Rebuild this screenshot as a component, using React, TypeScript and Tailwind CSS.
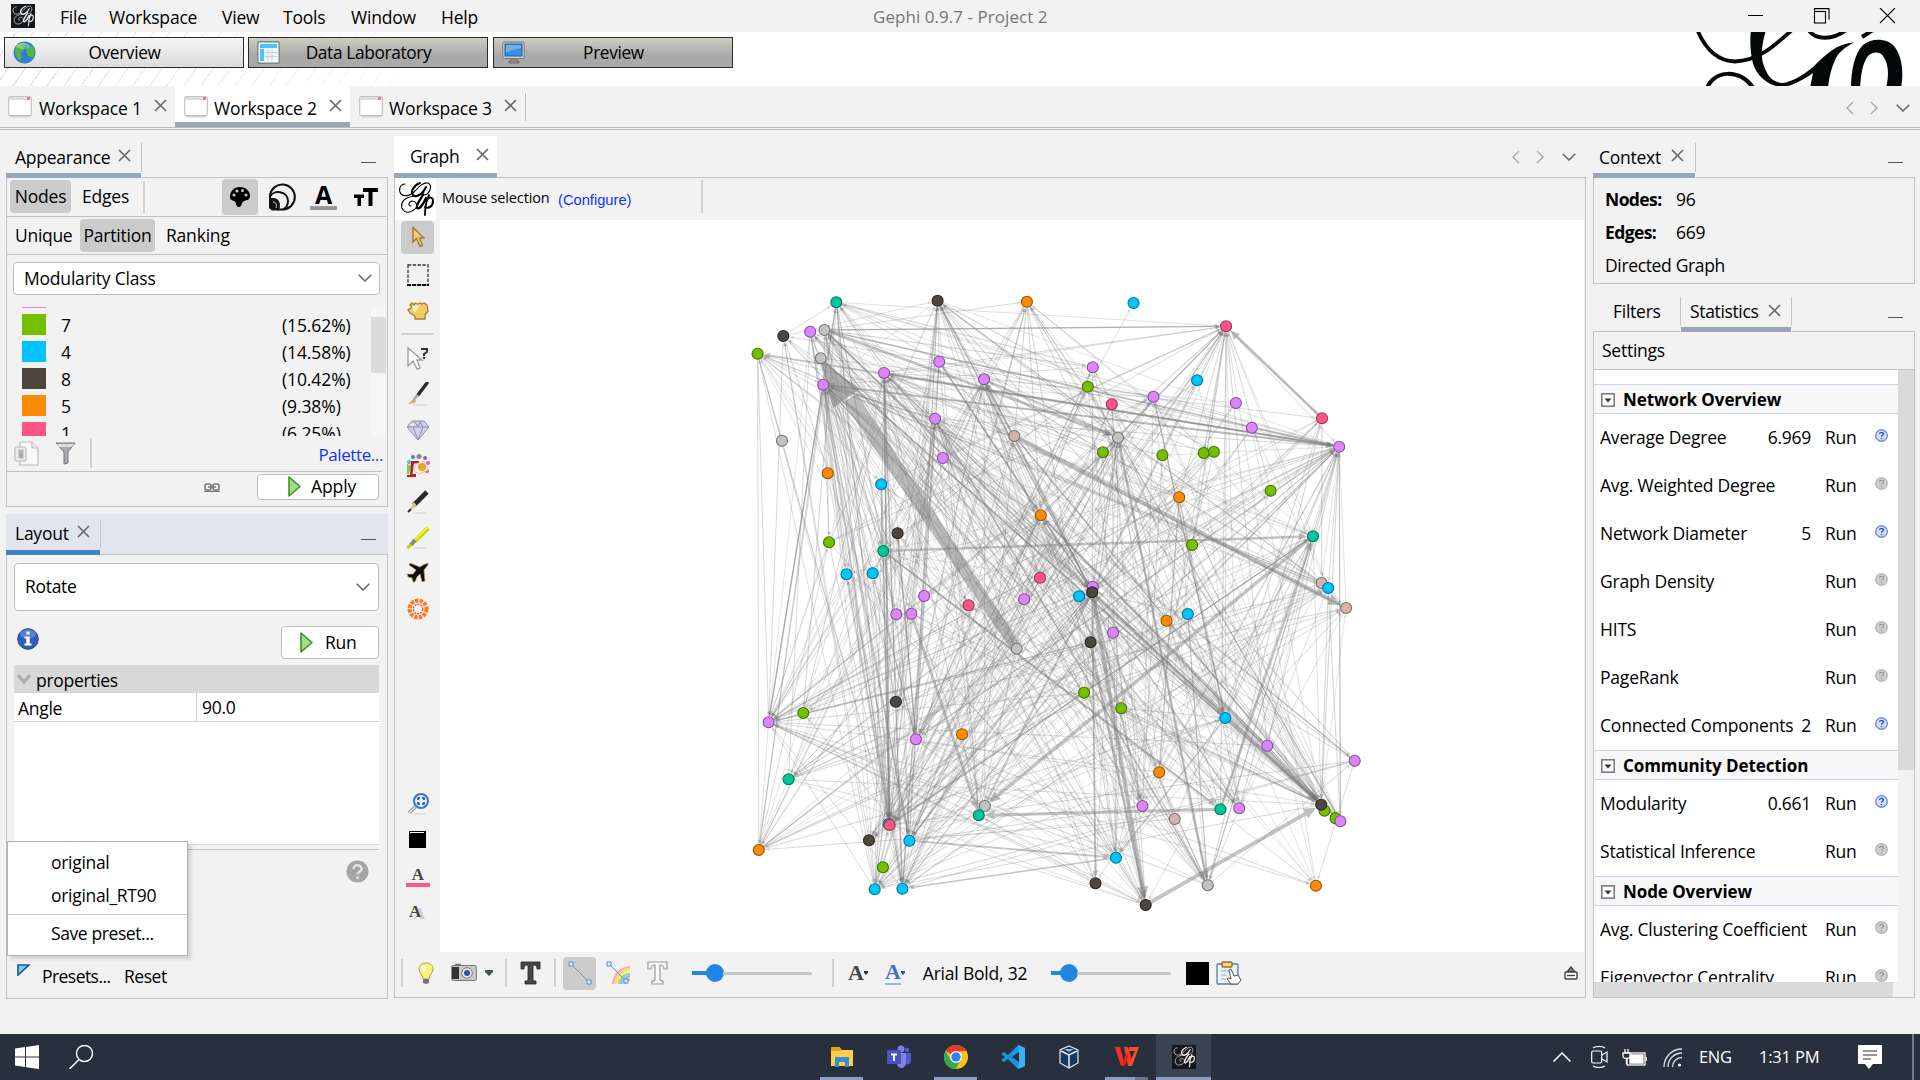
import React from 'react';

type Kids = { children?: React.ReactNode };

/* ---------- graph data ---------- */
const FILL: Record<string, string> = {
  t: '#00c49a', d: '#4c463e', o: '#ff8a05', b: '#00c4ff', p: '#ff5584', v: '#dc85ff', g: '#c2c2c2', n: '#73c000', r: '#d3b3b0',
};
const RING: Record<string, string> = {
  t: '#00765c', d: '#2a2622', o: '#995200', b: '#007599', p: '#99334f', v: '#845099', g: '#747474', n: '#457300', r: '#7f6b69',
};
const NODES: [string, number, number][] = [
  ['t', 836.3, 302.3], ['d', 937.6, 300.7], ['o', 1026.9, 301.7], ['b', 1133.5, 303], ['p', 1226.1, 326.3], ['d', 783.3, 336],
  ['v', 810.2, 331.7], ['g', 824.5, 330], ['n', 757.6, 353.7], ['g', 820.8, 358.3], ['v', 884.1, 373], ['v', 939.2, 361.7],
  ['v', 984.1, 379.3], ['v', 823.3, 384.7], ['v', 1092.7, 367.3], ['n', 1087.8, 386.7], ['b', 1197.1, 380.3], ['p', 1111.8, 404.3],
  ['v', 1153.5, 396.7], ['v', 1235.9, 403], ['v', 1251.8, 427.7], ['p', 1322, 418.3], ['v', 1339.2, 446.7], ['v', 935.1, 418.7],
  ['r', 1014.3, 436], ['g', 1118, 437.7], ['g', 782, 440.7], ['v', 942.9, 458], ['n', 1102.9, 452.3], ['n', 1162.4, 455.3],
  ['n', 1203.7, 453], ['n', 1213.9, 451.7], ['o', 827.8, 473.3], ['b', 881.2, 484.3], ['n', 1270.6, 490.7], ['o', 1179.2, 497.3],
  ['o', 1040.8, 515.3], ['t', 1313, 536.3], ['d', 897.6, 533.3], ['n', 829, 542.3], ['t', 883.3, 551], ['n', 1192.2, 545],
  ['b', 846.5, 574.3], ['b', 872.7, 573.3], ['p', 1040, 577.7], ['r', 1321.6, 583], ['b', 1328.2, 588], ['v', 1092.7, 586.7],
  ['d', 1092.2, 592.3], ['b', 1079.2, 596.3], ['v', 1024.1, 599.3], ['v', 924.1, 596], ['p', 968.6, 605.3], ['r', 1346.1, 608],
  ['v', 896.3, 614.3], ['v', 911.4, 613.7], ['o', 1166.5, 620.7], ['b', 1187.8, 614], ['v', 1113.1, 632.7], ['d', 1090.6, 642.3],
  ['g', 1016.7, 648.7], ['n', 1084.1, 692.7], ['n', 1121.2, 708.3], ['d', 895.9, 701.7], ['n', 803.3, 713], ['v', 768.6, 722.3],
  ['b', 1225.3, 718], ['v', 915.9, 739.3], ['o', 962, 734.3], ['v', 1267.3, 745.7], ['v', 1354.7, 760.7], ['o', 1159.2, 772.3],
  ['t', 788.6, 779.3], ['g', 984.9, 806], ['t', 978.8, 815.3], ['v', 1142.4, 806], ['t', 1220.4, 809.3], ['v', 1239.2, 808.3],
  ['r', 1174.7, 819], ['n', 1324.5, 810.7], ['d', 1321.2, 804.7], ['n', 1335.5, 818.3], ['v', 1340.4, 821.3], ['b', 888.5, 824],
  ['p', 889.6, 824.9], ['b', 909.4, 840.7], ['d', 869, 840.3], ['o', 758.8, 850], ['n', 882.9, 867.3], ['b', 1115.9, 857.7],
  ['d', 1095.5, 883.3], ['b', 874.7, 889.3], ['b', 902.4, 888.7], ['g', 1207.8, 885.3], ['o', 1315.9, 885.7], ['d', 1145.7, 905],
];
/* source, target, weight */
const HEAVY: [number, number, number][] = [
  [24, 53, 4], [40, 37, 2.4], [21, 4, 2.8], [37, 73, 3.4], [95, 80, 3.8], [76, 74, 3], [48, 95, 4], [59, 95, 2.5],
  [13, 22, 2], [10, 22, 2], [7, 22, 1.6], [48, 80, 3], [36, 80, 2], [7, 25, 2.8], [22, 8, 1.8], [25, 93, 2.4], [55, 74, 2.8], [76, 37, 2.4],
  [40, 76, 2], [13, 65, 1.4], [12, 25, 2], [23, 93, 1.6], [10, 84, 2], [33, 84, 1.8], [59, 65, 1.5], [12, 48, 1.7], [1, 48, 1.6],
  [48, 90, 1.8], [85, 89, 1.8], [89, 92, 1.5], [13, 85, 1.5], [10, 92, 1.4], [7, 48, 1.8], [9, 80, 1.8], [18, 66, 1.4], [7, 4, 1.4],
  [37, 84, 1.4], [22, 67, 1.4], [38, 67, 1.4], [48, 75, 2], [14, 67, 1.3], [66, 89, 1.3], [11, 36, 1.8], [35, 71, 1.4], [24, 80, 1.3], [36, 77, 1.5],
];
const HUBS: [number, number][] = [
  [13, 38], [22, 38], [80, 38], [65, 34], [4, 30], [48, 30], [10, 28], [1, 20], [7, 22], [92, 24], [91, 20], [0, 14], [85, 20],
  [84, 20], [40, 18], [36, 20], [6, 14], [2, 12], [12, 20], [23, 18], [25, 18], [87, 12], [95, 10], [93, 10], [89, 14], [67, 14],
  [66, 14], [82, 8], [37, 10], [75, 10], [72, 10], [8, 7], [46, 8], [53, 5], [21, 5], [77, 9], [86, 8], [94, 3], [70, 4], [18, 8], [74, 8],
];

function buildEdges(): [number, number, number][] {
  let seed = 9173;
  const next = () => {
    seed = (seed * 1103515245 + 12345) % 2147483648;
    return seed / 2147483648;
  };
  const out: [number, number, number][] = [];
  const seen = new Set<string>();
  for (const [hub, count] of HUBS) {
    let made = 0;
    let tries = 0;
    while (made < count && tries++ < 900) {
      const other = Math.floor(next() * NODES.length);
      if (other === hub || [3, 26, 32, 68, 81, 79, 88].includes(other)) continue;
      const dy = Math.abs(NODES[hub][2] - NODES[other][2]);
      if (dy < 120 && next() < 0.75) continue;
      if (NODES[hub][2] > 835 && NODES[other][2] > 835) continue;
      const key = hub < other ? hub + '-' + other : other + '-' + hub;
      if (seen.has(key)) continue;
      seen.add(key);
      made++;
      const w = 0.6 + next() * 0.5;
      out.push(next() < 0.4 ? [hub, other, w] : [other, hub, w]);
    }
  }
  out.push([15, 3, 0.8], [7, 4, 0.9], [5, 0, 0.9], [5, 1, 0.8], [8, 87, 0.9], [22, 82, 0.9], [32, 84, 0.8]);
  return out;
}
const EDGES = buildEdges();

function Edge({ e }: { e: [number, number, number] }) {
  const [, x1, y1] = NODES[e[0]];
  const [, x2, y2] = NODES[e[1]];
  const w = e[2];
  const len = Math.hypot(x2 - x1, y2 - y1);
  const ux = (x2 - x1) / len;
  const uy = (y2 - y1) / len;
  const tipX = x2 - ux * 6;
  const tipY = y2 - uy * 6;
  const al = 2 + w * 2.6;
  const aw = 0.3 + w * 1.35;
  const bx = tipX - ux * al;
  const by = tipY - uy * al;
  return (
    <g opacity={w > 1.2 ? 0.46 : 0.32}>
      <line x1={x1} y1={y1} x2={bx} y2={by} stroke="#808080" strokeWidth={w} />
      <path d={`M${tipX} ${tipY}L${bx - uy * aw} ${by + ux * aw}L${bx + uy * aw} ${by - ux * aw}Z`} fill="#707070" />
    </g>
  );
}

function GraphCanvas() {
  return (
    <svg className="block h-[732px] w-[1144px] bg-white" viewBox="440 220 1144 732">
      {EDGES.map((e, i) => <Edge key={i} e={e} />)}
      {HEAVY.map((e, i) => <Edge key={i} e={e} />)}
      <path d="M1021 645L857 394L843 402L1012 651Z" fill="#808080" opacity="0.52" />
      <path d="M821 360L860 389L833 408Z" fill="#808080" opacity="0.6" />
      {NODES.map(([k, x, y], i) => (
        <circle key={i} cx={x} cy={y} r="5.5" fill={FILL[k]} stroke={RING[k]} strokeWidth="1.1" />
      ))}
    </svg>
  );
}

/* ---------- small drawings ---------- */
const GephiMark = ({ className = '', ink = '#000' }: { className?: string; ink?: string }) => (
  <svg className={className} viewBox="0 0 36 36" fill="none" stroke={ink} strokeLinecap="round">
    <path d="M7 3C2 3 0 9 3 13C6 16 12 15 16 11C21 6 25 1 30 2C34 4 33 10 29 13C26 15 24 13 25 11" strokeWidth="1.1" />
    <path d="M22 2C16 4 12 11 15 14C18 17 24 14 28 6" strokeWidth="2" />
    <path d="M26 11C21 16 15 14 9 17C4 19 2 25 5 29C8 33 15 31 18 27C20 24 18 20 14 20C10 21 10 25 13 25" strokeWidth="1.1" />
    <path d="M25 14C22 19 18 24 19 27C21 29 25 24 28 17" strokeWidth="2.300" />
    <path d="M31 14C27 22 27 28 27 34" strokeWidth="1.800" />
    <path d="M28 20C31 15 35 16 35 20C35 25 31 28 27 26" strokeWidth="2" />
  </svg>
);
const Cross = ({ className = '' }: { className?: string }) => (
  <svg className={'size-[13px] shrink-0 ' + className} viewBox="0 0 13 13" stroke="#6b6b6b" strokeWidth="1.7"><path d="M1 1L12 12M12 1L1 12" /></svg>
);
const Chevron = ({ className = '' }: { className?: string }) => (
  <svg className={'h-2 w-3.5 shrink-0 ' + className} viewBox="0 0 14 8" fill="none" stroke="#6a6a6a" strokeWidth="1.6"><path d="M.7.8L7 7L13.3.8" /></svg>
);
const Side = ({ flip = false, className = '' }: { flip?: boolean; className?: string }) => (
  <svg className={'h-3.5 w-2 shrink-0 ' + className} viewBox="0 0 8 14" fill="none" stroke="#a9a9a9" strokeWidth="1.4"><path d={flip ? 'M1 1L7 7L1 13' : 'M7 1L1 7L7 13'} /></svg>
);
const Doc = ({ className = '' }: { className?: string }) => (
  <svg className={'h-[22px] w-6 shrink-0 ' + className} viewBox="0 0 24 22">
    <rect x="1" y="16" width="22" height="5.5" rx="3" fill="#d5d5d5" />
    <rect x=".7" y=".7" width="22.6" height="19" rx="1.5" fill="#fff" stroke="#c3c3c3" strokeWidth="1.2" />
    <path d="M1.3 1.3H22.700V4H1.300Z" fill="#dcdcdc" /><path d="M19 1H22V4H19Z" fill="#d98880" />
  </svg>
);
const Play = ({ className = '' }: { className?: string }) => (
  <svg className={'h-[21px] w-[13px] shrink-0 ' + className} viewBox="0 0 13 21"><path d="M1 1L12 10.500L1 20Z" fill="#a4d98a" stroke="#3a9428" strokeWidth="1.6" strokeLinejoin="round" /></svg>
);
const Help = ({ on }: { on?: boolean }) => (
  <svg className="size-[13px] shrink-0" viewBox="0 0 13 13">
    <circle cx="6.500" cy="6.500" r="5.800" fill={on ? '#d9e1fa' : '#cfcfcf'} stroke={on ? '#6f8fe6' : '#b8b8b8'} strokeWidth="1.4" />
    <path d="M4.500 5C4.500 2.800 8.500 2.800 8.500 5C8.500 6.300 6.500 6.200 6.500 7.700M6.500 9V10.200" fill="none" stroke={on ? '#2c49b8' : '#969696'} strokeWidth="1.300" />
  </svg>
);
const Minimise = ({ className = '' }: { className?: string }) => <div className={'h-px w-[15px] shrink-0 bg-[#555] ' + className} />;
const VRule = ({ className = '' }: { className?: string }) => <div className={'w-0.5 shrink-0 bg-[#d0d0d0] ' + className} />;

/* ---------- header ---------- */
function TitleBar() {
  return (
    <header className="flex h-8 shrink-0 items-center bg-[#f2f2f2] pl-[11px]">
      <div className="h-6 w-6 bg-[#15181c] p-px"><GephiMark ink="#e8e8e8" className="size-full" /></div>
      <nav className="flex pt-0.5 text-[17.500px] tracking-[-0.2px]">
        <span className="ml-[25px] w-[49px]">File</span><span className="w-[113px]">Workspace</span><span className="w-[61px]">View</span>
        <span className="w-[68px]">Tools</span><span className="w-[90px]">Window</span><span className="w-[52px]">Help</span>
      </nav>
      <span className="ml-[380px] w-[200px] pt-0.5 text-[17px] tracking-[0.05px] text-[#757575]">Gephi 0.9.7 - Project 2</span>
      <svg className="ml-[675px] h-4 w-[148px]" viewBox="0 0 148 16" fill="none" stroke="#000" strokeWidth="1.1">
        <path d="M0 7.500H15M70 0.600H81V11.500M66.500 4V.6H70" /><rect x="66.500" y="3.500" width="11" height="11.500" fill="#f2f2f2" /><path d="M132 0L147 15M147 0L132 15" />
      </svg>
    </header>
  );
}

function ModeButton({ children, icon, on }: Kids & { icon: React.ReactNode; on?: boolean }) {
  return (
    <div className={'flex h-[31px] w-60 items-center border-[1.500px] border-[#2b2b2b] pl-2 ' + (on ? 'bg-gradient-to-b from-[#f4f4f4] to-[#dcdcdc]' : 'bg-gradient-to-b from-[#cfcfc3] to-[#a9a9a9] to-60%')}>
      {icon}
      <span className="flex-1 pr-[30px] text-center text-[17.300px] tracking-[-0.35px]">{children}</span>
    </div>
  );
}

function Banner() {
  return (
    <div className="relative h-[54px] shrink-0 overflow-hidden bg-white">
      <div className="absolute inset-y-0 left-0 w-[480px] bg-[repeating-linear-gradient(125deg,#fff_0_13px,#dcdcdc_13px_14px)]" />
      <div className="absolute inset-y-0 left-0 w-[482px] bg-gradient-to-r from-transparent to-white" />
      <div className="relative flex pt-[5px] pl-1">
        <ModeButton on icon={<svg className="size-[23px]" viewBox="0 0 23 23"><circle cx="11.500" cy="11.500" r="11" fill="#2f7fd0" /><path d="M3 5C7 0 12 1 13 3L10 6L11 9L7 12L9 15L7 20C3 16 0 11 3 5ZM14 6L19 5C23 10 22 14 20 17L15 15L13 10Z" fill="#53b549" /><ellipse cx="10" cy="5" rx="7" ry="3" fill="#fff" opacity=".3" /></svg>}>Overview</ModeButton>
        <div className="w-1" />
        <ModeButton icon={<svg className="size-[23px]" viewBox="0 0 23 23"><rect x=".8" y=".8" width="21.400" height="21.400" rx="1.500" fill="#f3f6f7" stroke="#6e8a8c" strokeWidth="1.4" /><path d="M3 3H20V7H3ZM3 8H7V20H3Z" fill="#4cc3f5" /><path d="M11 8V20M15 8V20M8 11.500H20M8 15.500H20" stroke="#c6d0d3" /></svg>}>Data Laboratory</ModeButton>
        <div className="w-[5px]" />
        <ModeButton icon={<svg className="size-[23px]" viewBox="0 0 23 23"><path d="M9 17H15V20H17V22H7V20H9Z" fill="#8b8b8b" stroke="#666" strokeWidth=".8" /><rect x=".8" y="1" width="21.400" height="16.500" rx="1.500" fill="#cfcfcf" stroke="#777" /><rect x="3" y="3" width="17" height="12" fill="#3a8fdd" stroke="#1d5f9f" /><path d="M4 4H19V7L4 11Z" fill="#83bdf0" opacity=".7" /></svg>}>Preview</ModeButton>
      </div>
      <svg className="absolute top-0 left-[1694px] h-[54px] w-[214px]" viewBox="0 0 214 54" fill="none" stroke="#040808">
        <path d="M3-3C11 17 24 29 41 29.500C64 29 80 14 98-2" strokeWidth="3.800" />
        <path d="M13 56C20 38 46 36 60 57" strokeWidth="4" />
        <path d="M57-2H72C68 12 66 24 70 34C74 46 80 50 88 51C98 50 108 44 119 35C132 22 144 11 160 10.500C150 16 144 21 141 28C137 37 135 46 134 56H116L119 41C106 50 96 55 86 55C70 52 60 40 58 27C56 16 56 6 57-2Z" fill="#040808" stroke="none" />
        <path d="M114-3C121 9 139 8 152-2" strokeWidth="4" /><path d="M168 5L179-2" strokeWidth="4" />
        <path d="M157 56C157 40 160 22 169 13C178 6 192 6 200 14C208 24 210 40 207 56H192C195 44 195 32 189 24C185 19 178 20 174 24C168 32 167 44 166 56Z" fill="#040808" stroke="none" />
      </svg>
    </div>
  );
}

function WorkspaceTabs() {
  return (
    <div className="flex h-[42px] shrink-0 border-b border-[#bdbdbd] bg-[#f2f2f2] text-[17.500px] tracking-[-0.150px]">
      <div className="flex w-[175px] items-center pt-px pl-2"><Doc /><span className="ml-[7px] w-[105px] pt-0.5">Workspace 1</span><Cross className="mb-[3px] ml-2.5" /></div>
      <div className="flex w-[175px] items-center border-b-[5px] border-[#99a5b8] bg-white pt-1.5 pl-[9px]"><Doc /><span className="ml-[6px] w-[105px] pt-0.5">Workspace 2</span><Cross className="mb-[3px] ml-2.5" /></div>
      <div className="flex w-[175px] items-center pt-px pl-[9px]"><Doc /><span className="ml-[6px] w-[105px] pt-0.5">Workspace 3</span><Cross className="mb-[3px] ml-2.5" /></div>
      <div className="mt-[7px] h-7 w-px bg-[#c4c4c4]" />
      <div className="flex flex-1 items-center justify-end pt-0.5 pr-2.5"><Side /><Side flip className="ml-4" /><Chevron className="ml-[18px]" /></div>
    </div>
  );
}

/* ---------- left column ---------- */
const CLASSES = [['7', '15.62%', 'bg-[#73c000]'], ['4', '14.58%', 'bg-[#00c4ff]'], ['8', '10.42%', 'bg-[#4c463e]'], ['5', '9.38%', 'bg-[#ff8a05]'], ['1', '6.25%', 'bg-[#ff5584]']];

function Appearance() {
  return (
    <section>
      <div className="flex h-[35px] text-[17.500px] tracking-[-0.250px]">
        <div className="flex w-[135px] items-center border-b-[5px] border-[#99a5b8] pl-[9px]"><span className="w-[94px]">Appearance</span><Cross className="mb-1 ml-[9px]" /></div>
        <div className="h-[29px] w-px bg-[#c4c4c4]" />
        <div className="flex flex-1 items-center justify-end border-b border-[#c1c1c1] pr-3"><Minimise className="mt-1.5" /></div>
      </div>
      <div className="h-[329px] border border-t-0 border-[#c1c1c1]">
        <div className="flex h-[39px] items-center border-b border-[#c1c1c1] text-[17.500px] tracking-[-0.200px]">
          <div className="ml-[3px] flex h-[33px] w-[61px] items-center justify-center rounded bg-[#cbcbcb]">Nodes</div>
          <span className="ml-[11px] w-[49px]">Edges</span><VRule className="ml-3 h-8" />
          <div className="ml-[77px] flex size-9 items-center justify-center rounded bg-[#cbcbcb]">
            <svg className="size-[22px]" viewBox="0 0 22 22"><path d="M11 1C5 1 1 5 1 11C1 14 3 14 5 15C8 16 6 21 10 21C13 21 12 17 15 15C18 14 21 14 21 10C21 5 17 1 11 1Z" /><g fill="#cbcbcb"><circle cx="5" cy="9" r="1.500" /><circle cx="8" cy="5" r="1.500" /><circle cx="13.500" cy="4.500" r="1.500" /><circle cx="17" cy="9" r="1.500" /></g></svg>
          </div>
          <svg className="ml-[10px] size-7" viewBox="0 0 28 28" fill="none" stroke="#111" strokeWidth="2"><path d="M2 15V12A12.500 12.500 0 1 1 15 26.500H10" /><path d="M2 14C5 6 20 8 20 18C20 23 18 25 15 26.500" /><path d="M1 15H6C12 16 13 22 11 27.500H4L1 25Z" fill="#111" stroke="none" /><path d="M5 19C8 19 9 22 8 25" stroke="#ccc" strokeWidth="1" /></svg>
          <div className="ml-[14px] flex w-[27px] flex-col items-center border-b-4 border-[#999] text-[25px] leading-[23px] font-bold">A</div>
          <svg className="ml-[17px] h-[18px] w-6" viewBox="0 0 24 18" fill="#000"><path d="M9 0H24V4H18.500V18H14.500V4H9ZM0 6.500H10V10H7V18H3.500V10H0Z" /></svg>
        </div>
        <div className="flex h-[38px] items-center border-b border-[#c1c1c1] text-[17.500px] tracking-[-0.200px]">
          <span className="ml-2 w-[65px] tracking-[-0.300px]">Unique</span><span className="flex h-[33px] w-[75px] items-center justify-center rounded bg-[#cbcbcb]">Partition</span><span className="ml-[11px]">Ranking</span>
        </div>
        <div className="mt-[7px] ml-[6px] flex h-[33px] w-[367px] items-center rounded border border-[#bdbdbd] bg-white pr-[7px] pl-2.5 text-[17.500px] tracking-[-0.200px]"><span className="flex-1">Modularity Class</span><Chevron /></div>
        <div className="mt-3 flex h-[129px] overflow-hidden">
          <div className="w-[364px] text-[17.500px]">
            <div className="ml-[15px] h-px w-6 bg-[#dc85ff]" />
            <div className="h-[6px]" />
            {CLASSES.map(([n, pct, bg]) => (
              <div key={n} className="flex h-[27px] items-start"><div className={'ml-[15px] h-[21px] w-6 ' + bg} /><span className="ml-[15px] w-[221px] leading-[22px]">{n}</span><span className="leading-[22px] tracking-[-0.100px]">({pct})</span></div>
            ))}
          </div>
          <div className="w-[15px] bg-[#f6f6f6] pt-2.5"><div className="h-[56px] bg-[#dbdbdb]" /></div>
        </div>
        <div className="mr-[5px] flex h-[36px] items-center border-b border-[#c1c1c1] pl-[7px]">
          <svg className="size-[25px]" viewBox="0 0 25 25" fill="#ececec" stroke="#bcbcbc" strokeWidth="1.200"><path d="M6 1H18L24 7V24H6Z" fill="#f8f8f8" /><path d="M18 1V7H24" /><rect x="1" y="6" width="11" height="14" rx="2" /><path d="M5 9H9V17H5Z" fill="#aaa" /></svg>
          <svg className="ml-4 h-6 w-[21px]" viewBox="0 0 21 24"><path d="M1 2H20L13 11V22L9 23V11Z" fill="#a9a9b0" stroke="#76767c" /><path d="M2 3H19L17 6H4Z" fill="#dcdce4" /></svg>
          <VRule className="ml-3.5 h-[30px]" /><span className="-mr-px flex-1 pt-1 text-right text-[17px] tracking-[-0.400px] text-[#1133ff]">Palette...</span>
        </div>
        <div className="flex h-[32px] items-center">
          <svg className="ml-[197px] h-[9px] w-4" viewBox="0 0 16 9" fill="none" stroke="#777" strokeWidth="1.600"><rect x="1" y="1" width="6" height="6" rx="2" /><rect x="9" y="1" width="6" height="6" rx="2" /><path d="M4 4H12M0 8.500H16" /></svg>
          <div className="mb-0.5 ml-[37px] flex h-[26px] w-[122px] items-center rounded border border-[#bdbdbd] bg-white pl-[30px] text-[17.500px] tracking-[-0.100px]"><Play /><span className="ml-2.5">Apply</span></div>
        </div>
      </div>
    </section>
  );
}

function LayoutPanel() {
  return (
    <section className="relative mt-[7px]">
      <div className="flex h-[41px] bg-[#e2e5ed] text-[17.500px] tracking-[-0.250px]">
        <div className="flex w-[94px] items-center border-b-[5px] border-[#3a84c9] pt-1 pl-[9px]"><span className="w-[53px]">Layout</span><Cross className="mb-1 ml-[9px]" /></div>
        <div className="mt-[6px] h-7 w-px bg-[#c4c4c4]" />
        <div className="flex flex-1 items-center justify-end border-b border-[#c1c1c1] pr-3"><Minimise className="mt-3" /></div>
      </div>
      <div className="h-[444px] border border-t-0 border-[#c1c1c1] px-[7px] pt-2 text-[17.500px] tracking-[-0.300px]">
        <div className="flex h-12 w-[365px] items-center rounded border border-[#bdbdbd] bg-white pr-2 pl-2.5"><span className="flex-1">Rotate</span><Chevron /></div>
        <div className="mt-[15px] flex h-[33px]">
          <svg className="mt-0.5 ml-[3px] size-[22px]" viewBox="0 0 22 22"><circle cx="11" cy="11" r="10.300" fill="#2f5db8" stroke="#224694" /><ellipse cx="11" cy="6" rx="8" ry="4.500" fill="#6d92dc" opacity=".7" /><path d="M9.500 3.500H12.500V6.500H9.500ZM7.500 8.500H12.700V15.500H14.500V17.500H7.500V15.500H9.300V10.500H7.500Z" fill="#fff" /></svg>
          <div className="ml-[242px] flex w-[98px] items-center rounded border border-[#bdbdbd] bg-white pl-[18px]"><Play /><span className="ml-3">Run</span></div>
        </div>
        <div className="mt-[6px] h-[180px] w-[365px] border-b border-[#d8d8d8] bg-white">
          <div className="flex h-7 items-center bg-[#d8d8d8] pl-[3px]"><svg className="h-2.5 w-3.5" viewBox="0 0 14 10" fill="none" stroke="#aaa" strokeWidth="3"><path d="M1 1L7 8L13 1" /></svg><span className="ml-[5px] pt-1">properties</span></div>
          <div className="flex h-[29px] items-center border-b border-[#d5d5d5]"><span className="flex h-full w-[183px] items-center border-r border-[#d5d5d5] pt-1 pl-1">Angle</span><span className="pt-0.5 pl-[5px]">90.0</span></div>
        </div>
        <div className="mt-1 h-px w-[365px] bg-[#c1c1c1]" />
        <div className="flex h-[33px] items-end justify-end pr-[11px]">
          <svg className="size-[23px]" viewBox="0 0 23 23"><circle cx="11.500" cy="11.500" r="11" fill="#a5a5a5" /><path d="M7.500 9C7.500 4 15.500 4 15.500 9C15.500 12 11.500 11.500 11.500 14.500M11.500 16.500V19" fill="none" stroke="#e2e2e2" strokeWidth="2.600" /></svg>
        </div>
        <div className="mt-20 flex items-center">
          <svg className="mb-3 ml-[3px] h-3 w-[13px]" viewBox="0 0 13 12"><path d="M1 1H12L1 11Z" fill="#8cc5f0" stroke="#0b5aa5" strokeWidth="1.600" /></svg>
          <span className="ml-[12px] w-[82px] tracking-[-0.550px]">Presets...</span><span className="tracking-[-0.450px]">Reset</span>
        </div>
      </div>
      <div className="absolute top-[327px] left-px flex h-[115px] w-[181px] flex-col border-[1.500px] border-[#b0b0b0] bg-white pl-[43px] text-[17.500px] tracking-[-0.300px] shadow-[3px_3px_4px_rgba(0,0,0,0.15)]">
        <span className="mt-[6px] h-[33px] leading-[29px]">original</span><span className="h-[33px] leading-[29px]">original_RT90</span>
        <div className="-ml-[43px] h-px bg-[#c8c8c8]" /><span className="mt-[4px] leading-[29px] tracking-[-0.400px]">Save preset...</span>
      </div>
    </section>
  );
}

/* ---------- centre ---------- */
const Tool = ({ children, className = 'h-9' }: Kids & { className?: string }) => (
  <div className={'flex shrink-0 items-center justify-center ' + className}><svg className="size-6" viewBox="0 0 24 24" fill="none">{children}</svg></div>
);

function ToolColumn() {
  return (
    <div className="flex w-[45px] flex-col">
      <div className="mt-px ml-[6px] flex size-[33px] items-center justify-center rounded bg-[#cbcbcb]"><svg className="h-[22px] w-3.5" viewBox="0 0 14 22"><path d="M2 1.500V16L5.500 12.500L9 20.500L11.500 19.500L8.500 12H13Z" fill="#f7cf68" stroke="#a97a3c" strokeWidth="1.500" /></svg></div>
      <div>
        <Tool className="mt-[3px] h-[37px]"><rect x="2" y="2" width="20" height="20" stroke="#333" strokeWidth="1.300" strokeDasharray="3.300 1.500" /><path d="M1 22H23" stroke="#111" strokeWidth="1.800" strokeDasharray="4 1" /></Tool>
        <Tool className="h-[35px]"><path d="M4 6L6 4L8 6L9 4L12 5L14 4L16 5L18 4L21 6L22 12L19 16V20H9V17L4 14L2 11L6 8Z" fill="#efcd62" stroke="#a97a3c" strokeWidth="1.300" /><path d="M6 7L14 6L8 14Z" fill="#fff2ca" /></Tool>
        <div className="mt-[4px] mr-[6px] ml-[6px] h-0.5 bg-[#cfcfcf]" />
        <Tool className="mt-[5px] h-9"><path d="M2 2V20L7 15L11 23L14 22L11 14H16Z" fill="#fff" stroke="#999" strokeWidth="1.300" /><path d="M15 3H21V6L18 8V10M18 11V13" stroke="#333" strokeWidth="2" /></Tool>
        <Tool><path d="M21 1L12 13" stroke="#2a2a2a" strokeWidth="3.400" strokeLinecap="round" /><path d="M12 13L8 17" stroke="#aaa" strokeWidth="3" /><path d="M8 16L2 22L9 21L10 18Z" fill="#c9b47c" /><path d="M7 23H21" stroke="#ccc" /></Tool>
        <Tool><path d="M6 3H18L23 9L12 22L1 9Z" fill="#d1d1ea" stroke="#8c8cac" /><path d="M1 9H23M7 9L12 22L17 9L14 4L12 9L9 4Z" stroke="#8f8fae" /><path d="M4 7L9 5L8 8Z" fill="#fff" /></Tool>
        <Tool><circle cx="3" cy="8" r="2" fill="#56bdd0" /><circle cx="7" cy="3" r="2" fill="#4c7bd8" /><circle cx="13" cy="2.500" r="2.500" fill="#888" /><circle cx="19" cy="4" r="2" fill="#9a52c8" /><circle cx="22" cy="9" r="2" fill="#e45fc4" /><circle cx="21" cy="17" r="2" fill="#e04f51" /><path d="M1 10L5 12L3 20H1Z" fill="#7bcf44" /><path d="M5 10L12 9L9 20L6 19Z" fill="#fff" /><path d="M5 7H13V9.500H8L6.500 20H10V23H1V21H4Z" fill="#b9201f" /><path d="M10 10L18 7L22 16L13 20L8 17Z" fill="#fff4df" stroke="#ccc" /><circle cx="16" cy="13" r="4" fill="#e9a626" /></Tool>
        <Tool><path d="M21 2L8 15" stroke="#2b2b2b" strokeWidth="4.600" /><path d="M8 12L11 16L3 21Z" fill="#d7c28d" /><path d="M2 22L5 19" stroke="#333" strokeWidth="2" /><path d="M8 23H20" stroke="#ccc" /></Tool>
        <Tool><path d="M22 2L9 15" stroke="#c9ce00" strokeWidth="4.400" /><path d="M22 1L9 14" stroke="#f4f230" strokeWidth="2" /><path d="M9 14L5 19" stroke="#888" strokeWidth="4" /><path d="M1 22L5 19" stroke="#c9ce00" strokeWidth="3" /><path d="M8 22H21" stroke="#ccc" /></Tool>
        <Tool className="h-[35px]"><path d="M22 2L17 4L14 6L4 2L3 4L10 9L7 13H1L2 16L6 17L7 21L9 21L11 16L14 13L16 21L19 20L18 9L22 4Z" fill="#111" stroke="#c7a76a" strokeWidth=".7" /></Tool>
        <Tool><circle cx="12" cy="12" r="8.500" stroke="#ff781f" strokeWidth="4" strokeDasharray="3.400 1.200" /><circle cx="12" cy="12" r="4.700" stroke="#ff4f2b" strokeWidth="1.400" strokeDasharray="2 1" /></Tool>
        <Tool className="mt-[159px] h-9"><circle cx="15" cy="9" r="7" fill="#e3ecfc" stroke="#416fd0" strokeWidth="2" /><path d="M12 8V6H14M16 6H18V8M18 10V12H16M14 12H12V10" stroke="#1944b0" strokeWidth="1.600" /><path d="M10 14L3 21" stroke="#999" strokeWidth="3.500" /><path d="M9 15L3 21" stroke="#eee" strokeWidth="1.300" /><path d="M8 22H20" stroke="#ccc" /></Tool>
        <div className="mt-[9px] ml-[14px] h-[17px] w-[17px] bg-black pt-px pl-px"><div className="h-px w-3.5 bg-white" /></div>
        <div className="mt-5 ml-[11px] flex h-[19px] w-6 flex-col items-center border-b-4 border-[#ff5584] text-[17px] leading-[14px] font-bold text-[#444] [font-family:'Liberation_Serif',serif]">A</div>
        <div className="mt-[15px] ml-3.5 h-5 text-[17px] leading-5 font-bold text-[#444] [font-family:'Liberation_Serif',serif] [text-shadow:4px_2px_0_#cfcfcf]">A</div>
      </div>
    </div>
  );
}

const Slider = ({ children }: Kids) => (
  <div className="flex h-[18px] w-[120px] items-center">{children}<div className="-mx-px size-[18px] shrink-0 rounded-full bg-[#2185e5]" /><div className="h-[3px] flex-1 rounded-r bg-[#c5c5c5]" /></div>
);
const Caret = ({ className = '' }: { className?: string }) => (
  <svg className={'h-1 w-1 ' + className} viewBox="0 0 5 5" fill="currentColor"><path d="M0 0H5V2L2.500 5L0 2Z" /></svg>
);

function BottomTools() {
  return (
    <div className="flex h-[44px] items-center pb-px">
      <VRule className="ml-1.5 h-7" />
      <svg className="ml-[15px] h-[23px] w-[16px]" viewBox="0 0 16 23"><path d="M5 17C5 13 1 11 1 7C1 3 4 1 8 1S15 3 15 7C15 11 11 13 11 17Z" fill="#faf17c" stroke="#a9a353" /><path d="M5 17H11V21L8 22L5 21Z" fill="#777" /><ellipse cx="6" cy="6" rx="2.500" ry="3" fill="#fff" opacity=".7" /></svg>
      <svg className="ml-[17px] h-[20px] w-[26px]" viewBox="0 0 26 20"><rect x=".7" y="2.500" width="24.600" height="15" rx="1.500" fill="#c9c9ce" stroke="#777" /><rect x="1" y="4" width="7" height="12" fill="#333" /><circle cx="16" cy="10" r="5.300" fill="#e7eaf2" stroke="#777" /><circle cx="16" cy="10" r="3" fill="#2f5597" /><path d="M4 .8H10V2.500H4Z" fill="#777" /></svg>
      <svg className="ml-2 h-[6px] w-2" viewBox="0 0 8 6"><path d="M0 0H8V2L4 6L0 2Z" fill="#44525c" /></svg>
      <VRule className="ml-3 h-7" />
      <svg className="ml-[13px] h-6 w-[21px]" viewBox="0 0 21 24"><path d="M1 1H20V8H17C17 5 16 4 13 4V18C13 20 14 20 16 20V23H5V20C7 20 8 20 8 18V4C5 4 4 5 4 8H1Z" fill="#474747" stroke="#222" strokeWidth=".8" /></svg>
      <VRule className="ml-[13px] h-7" />
      <div className="ml-[7px] flex size-[33px] items-center justify-center rounded bg-[#cbcbcb]"><svg className="size-6" viewBox="0 0 24 24"><path d="M3 3L21 21" stroke="#6b95bf" /><path d="M1 1H5V5H1ZM19 19H23V23H19Z" fill="#dcecff" stroke="#5b8fc5" /></svg></div>
      <svg className="ml-[10px] size-6" viewBox="0 0 24 24" fill="none"><g strokeWidth="2.200"><path d="M7 23C8 14 14 7 24 6" stroke="#ffa9a9" /><path d="M9 23C10 16 15 9 24 8" stroke="#ffd27e" /><path d="M11 23C12 17 17 11 24 10" stroke="#eef087" /><path d="M13 23C14 18 18 13 24 13" stroke="#90db93" /><path d="M15 23C16 20 19 16 24 15" stroke="#87b9f3" /><path d="M18 23C19 21 21 19 24 18" stroke="#c09be8" /></g><path d="M3 3L21 21" stroke="#6b95bf" /><path d="M1 1H5V5H1ZM18 18H22V22H18Z" fill="#dcecff" stroke="#5b8fc5" /></svg>
      <svg className="ml-[17px] h-6 w-[21px]" viewBox="0 0 21 24"><path d="M1 1H20V8H17C17 5 16 4 13 4V18C13 20 14 20 16 20V23H5V20C7 20 8 20 8 18V4C5 4 4 5 4 8H1Z" fill="#fafafa" stroke="#9a9a9a" strokeWidth="1.200" /></svg>
      <div className="ml-6"><Slider><div className="h-1 w-[15px] bg-[#2185e5]" /></Slider></div>
      <VRule className="ml-5 h-7" />
      <span className="ml-[14px] text-[22px] leading-7 font-bold text-[#444] [font-family:'Liberation_Serif',serif]">A</span><Caret className="text-[#333]" />
      <span className="ml-[17px] border-b-2 border-[#9ab2ee] text-[22px] leading-[22px] font-bold text-[#456fc9] [font-family:'Liberation_Serif',serif]">A</span><Caret className="text-[#2848aa]" />
      <span className="ml-[18px] w-[113px] text-[17.500px] tracking-[-0.200px] whitespace-nowrap">Arial Bold, 32</span>
      <div className="ml-[15px]"><Slider><div className="h-1 w-2.5 bg-[#2185e5]" /></Slider></div>
      <div className="ml-[15px] h-[23px] w-[23px] bg-black" />
      <svg className="ml-[7px] h-[24px] w-[26px]" viewBox="0 0 26 24"><rect x="1" y="3" width="21" height="20" rx="1" fill="#e9f0f6" stroke="#5e7c91" strokeWidth="1.300" /><rect x="6" y="1" width="10" height="5" rx="1" fill="#eed49b" stroke="#a86d11" strokeWidth="1.500" /><path d="M5 10H14M5 14H11M5 18H10" stroke="#97acbb" /><path d="M13 9L15 8L18 15L22 14L25 19L22 23H15L11 18L13 17L15 18Z" fill="#fff" stroke="#555" /></svg>
      <div className="flex-1" />
      <svg className="mr-[7px] h-[14px] w-3.5" viewBox="0 0 14 14" fill="#fff" stroke="#41414b" strokeWidth="1.400"><path d="M3 6L7 1L11 6Z" fill="#888" /><rect x="1" y="6" width="12" height="7" rx="1" /><path d="M3 9.500H11" /></svg>
    </div>
  );
}

function GraphPanel() {
  return (
    <main className="ml-[6px] w-[1192px]">
      <div className="flex h-[42px]">
        <div className="flex w-[103px] items-center border-b-[5px] border-[#99a5b8] bg-white pt-[5px] pl-[16px] text-[17.500px] tracking-[-0.350px]"><span className="w-[50px]">Graph</span><Cross className="mb-1 ml-4" /></div>
        <div className="flex flex-1 items-center justify-end border-b border-[#c1c1c1] pt-px pr-2.5"><Side /><Side flip className="ml-4" /><Chevron className="ml-[18px]" /></div>
      </div>
      <div className="h-[820px] border border-t-0 border-[#c1c1c1]">
        <div className="flex h-[42px] items-center">
          <div className="flex h-full w-[41px] items-center justify-center bg-white"><GephiMark className="size-9" /></div>
          <span className="mb-0.5 ml-[6px] w-[106px] text-[14.500px] tracking-[-0.150px] whitespace-nowrap">Mouse selection</span>
          <span className="mt-[3px] ml-2.5 w-[74px] text-[14.700px] text-[#1133ff] [font-family:'Liberation_Sans',sans-serif]">(Configure)</span><VRule className="mb-1 ml-[69px] h-[33px]" />
        </div>
        <div className="flex h-[732px]"><ToolColumn /><GraphCanvas /></div>
        <BottomTools />
      </div>
    </main>
  );
}

/* ---------- right column ---------- */
const Stat = ({ name, value, on }: { name: string; value?: string; on?: boolean }) => (
  <div className="flex h-12 items-center pb-px pl-[6px] text-[17.500px]"><span className="flex-1 whitespace-nowrap tracking-[-0.200px]">{name}</span><span className="mr-3.5">{value}</span><span className="w-[50px]">Run</span><div className="mr-2.5 pb-[3px]"><Help on={on} /></div></div>
);
const Group = ({ children }: Kids) => (
  <div className="flex h-[30px] items-center border-y border-[#ccd5f0] bg-[#f7f7f7] pt-[3px] pl-[7px] text-[17px] font-bold tracking-[-0.080px]">
    <svg className="mr-2 size-3.5" viewBox="0 0 14 14"><rect x=".8" y=".8" width="12.400" height="12.400" fill="#fff" stroke="#777" strokeWidth="1.500" /><path d="M3.500 5.500H10.500L7 9.500Z" fill="#333" /></svg>{children}
  </div>
);

function RightColumn() {
  return (
    <aside className="ml-[7px] w-[322px] text-[17.500px] tracking-[-0.250px]">
      <div className="mt-[7px] flex h-[35px]">
        <div className="flex w-[102px] items-center border-b-[5px] border-[#99a5b8] pl-[6px]"><span className="w-[63px]">Context</span><Cross className="mb-1 ml-[9px]" /></div>
        <div className="h-[29px] w-px bg-[#c4c4c4]" /><div className="flex flex-1 items-center justify-end border-b border-[#c1c1c1] pr-3"><Minimise className="mt-1.5" /></div>
      </div>
      <div className="h-[106px] border border-t-0 border-[#c1c1c1] pt-[5px] pl-[11px]">
        <div className="flex h-[33px] items-center"><b className="w-[71px] tracking-[-0.600px]">Nodes:</b>96</div><div className="flex h-[33px] items-center"><b className="w-[71px] tracking-[-0.600px]">Edges:</b>669</div><div className="flex h-[33px] items-center tracking-[-0.350px]">Directed Graph</div>
      </div>
      <div className="mt-[13px] flex h-[35px]">
        <span className="w-[87px] border-b border-[#c1c1c1] pt-px pl-[20px]">Filters</span><div className="h-7 w-px bg-[#c4c4c4]" />
        <div className="flex w-[110px] items-center border-b-[5px] border-[#99a5b8] pl-[9px]"><span className="w-[69px] tracking-[-0.350px]">Statistics</span><Cross className="mb-[3px] ml-[9px]" /></div>
        <div className="h-7 w-px bg-[#c4c4c4]" /><div className="flex flex-1 items-center justify-end border-b border-[#c1c1c1] pr-3"><Minimise className="mt-2" /></div>
      </div>
      <div className="flex h-[666px] flex-col border border-t-0 border-[#c1c1c1]">
        <div className="flex h-[38px] shrink-0 items-center border-b border-[#bcc4d4] pl-2">Settings</div>
        <div className="flex h-[612px] shrink-0">
          <div className="w-[304px] overflow-hidden bg-white">
            <div className="h-[14px]" /><Group>Network Overview</Group>
            <div className="h-[336px]">
              <Stat name="Average Degree" value="6.969" on /><Stat name="Avg. Weighted Degree" /><Stat name="Network Diameter" value="5" on /><Stat name="Graph Density" /><Stat name="HITS" /><Stat name="PageRank" /><Stat name="Connected Components" value="2" on />
            </div>
            <Group>Community Detection</Group><div className="h-[96px]"><Stat name="Modularity" value="0.661" on /><Stat name="Statistical Inference" /></div>
            <Group>Node Overview</Group><Stat name="Avg. Clustering Coefficient" /><Stat name="Eigenvector Centrality" />
          </div>
          <div className="w-4 bg-[#f2f2f2]"><div className="h-[400px] bg-[#dadada]" /></div>
        </div>
        <div className="flex-1 bg-[#f2f2f2]"><div className="h-full w-[299px] bg-[#dadada]" /></div>
      </div>
    </aside>
  );
}

/* ---------- taskbar ---------- */
const Task = ({ children, bar = '', className = 'w-[57px]' }: Kids & { bar?: string; className?: string }) => (
  <div className={'flex h-full flex-col items-center justify-between pt-[11px] ' + className}><svg className="size-6" viewBox="0 0 24 24">{children}</svg><div className={'h-[3px] ' + bar} /></div>
);

function Taskbar() {
  return (
    <footer className="flex h-[46px] shrink-0 items-center bg-[#282f3d] text-white">
      <svg className="ml-[15px] size-6" viewBox="0 0 24 24" fill="#fff"><path d="M0 3.500L10 2V11.400H0ZM11 1.900L24 0V11.400H11ZM0 12.500H10V22L0 20.500ZM11 12.500H24V24L11 22.200Z" /></svg>
      <svg className="ml-[30px] size-6" viewBox="0 0 24 24" fill="none" stroke="#fff" strokeWidth="1.400"><circle cx="15.500" cy="8.500" r="8" /><path d="M10 14.500L.5 24" /></svg>
      <div className="ml-[720px] flex h-full">
        <Task bar="w-[43px] bg-[#8ba0c0]"><path d="M1 2H9L12 5H23V21H1Z" fill="#ffcf4b" /><path d="M1 2H9L11 4V6H1Z" fill="#e9a30a" /><path d="M5 12H19V22H15V17H9V22H5Z" fill="#2f8fd8" /></Task>
        <Task><circle cx="14" cy="4" r="3.500" fill="#7b83eb" /><circle cx="20" cy="5" r="2.300" fill="#5059c9" /><path d="M11 8H19V17C19 25 10 25 10 18Z" fill="#7b83eb" /><path d="M19 8H24V16C24 20 20 20 19 19Z" fill="#5059c9" /><rect x="0" y="5" width="14" height="14" rx="1" fill="#4b53bc" /><path d="M4 8.500H10V10.500H8V16H6V10.500H4Z" fill="#fff" /></Task>
        <Task bar="w-[43px] bg-[#8ba0c0]"><circle cx="12" cy="12" r="12" fill="#fbc116" /><path d="M12 12L1.600 6A12 12 0 0 1 22.400 6L12 6.500Z" fill="#e33b2e" /><path d="M1.600 6A12 12 0 0 0 11.500 24L17 15L12 12L6.800 15Z" fill="#2da94f" /><circle cx="12" cy="12" r="6" fill="#fff" /><circle cx="12" cy="12" r="4.700" fill="#3a7cf0" /></Task>
        <Task><path d="M17 0L24 3V21L17 24L7 14L3 17L0 15L4 12L0 9L3 7L7 10ZM18 7L11 12L18 17Z" fill="#1595dc" fillRule="evenodd" /><path d="M17 0L24 3V21L17 24L18 17V7Z" fill="#3bb0f4" /></Task>
        <Task className="w-[56px]"><path d="M12 1L21 5V18L12 23L3 18V5Z" fill="#163861" stroke="#dce9f5" strokeWidth="1.200" /><path d="M4 6L12 10L20 6M12 10V22" stroke="#e9f2fa" strokeWidth="1.500" fill="none" /><path d="M7 4L12 7L17 4" fill="#8fb9dc" /></Task>
        <Task className="w-[59px]" bar="w-[43px] bg-gradient-to-r from-[#8ba0c0] from-70% to-[#66758c] to-70%"><path d="M0 2H5L9 17L6 21Z" fill="#ff2c25" /><path d="M9 2H13L17 16L15 21H13Z" fill="#ff3a25" /><path d="M6 21L12 7L13 12L10 21Z" fill="#e0241a" /><path d="M13 21L20 6H14V2H24L17 21Z" fill="#f94b27" /></Task>
        <div className="flex h-full w-[55px] flex-col items-center justify-between bg-[#3b4453] pt-[11px]"><div className="size-6 bg-[#15181c] p-px"><GephiMark className="size-full" ink="#f0f0f0" /></div><div className="h-[3px] w-full bg-[#8ba0c0]" /></div>
      </div>
      <svg className="ml-[342px] h-[10px] w-[18px]" viewBox="0 0 18 10" fill="none" stroke="#fff" strokeWidth="1.500"><path d="M.5 9.500L9 1L17.500 9.500" /></svg>
      <svg className="ml-[20px] h-[22px] w-[17px]" viewBox="0 0 17 22" fill="none" stroke="#fff" strokeWidth="1.200"><rect x=".7" y="5" width="10" height="12" rx="1.500" /><path d="M11 9L16 6V16L11 13M2 2C5 0 11 0 14 2M2 20C5 22 11 22 14 20" /></svg>
      <svg className="ml-[14px] h-[17px] w-[25px]" viewBox="0 0 25 17" fill="none" stroke="#fff" strokeWidth="1.300"><rect x="5" y="4" width="18" height="12" /><path d="M8 6H21V14H8Z" fill="#fff" /><path d="M24.300 8V12" /><path d="M1 4H8V7C8 9 6 9.500 4.500 9.500S1 9 1 7ZM3 4V0M6 4V0M4.500 10V15" fill="#282f3d" /></svg>
      <svg className="ml-[16px] size-[19px]" viewBox="0 0 19 19" fill="none" stroke="#dce0e6" strokeWidth="1.300"><path d="M1 19C1 9 9 1 19 1M5 19C5 11 11 5 19 5M9.500 19C9.500 13.500 13.500 9.500 19 9.500" /><circle cx="16.500" cy="17" r="1.600" fill="#fff" stroke="none" /></svg>
      <span className="ml-[17px] w-[60px] text-[16.500px] tracking-[-0.300px]">ENG</span><span className="w-[99px] text-[16.500px] tracking-[-0.200px]">1:31 PM</span>
      <svg className="h-6 w-6" viewBox="0 0 24 24"><path d="M0 0H24V19H15L11 24L7 19H0Z" fill="#fff" /><path d="M5 6H19M5 10H19M5 14H13" stroke="#282f3d" strokeWidth="1.200" /></svg>
      <div className="ml-[30px] h-full w-0.5 bg-[#747985]" />
    </footer>
  );
}

export default function App() {
  return (
    <div className="flex h-[1080px] w-[1920px] flex-col overflow-hidden bg-[#f2f2f2] text-black [font-family:'Open_Sans','Noto_Sans',sans-serif]">
      <TitleBar />
      <Banner />
      <WorkspaceTabs />
      <div className="mt-px h-px shrink-0 bg-[#bdbdbd]" />
      <div className="flex h-[904px] shrink-0 pt-[5.500px]">
        <div className="ml-[6px] w-[382px] pt-[7px]"><Appearance /><LayoutPanel /></div>
        <GraphPanel />
        <RightColumn />
      </div>
      <Taskbar />
    </div>
  );
}
